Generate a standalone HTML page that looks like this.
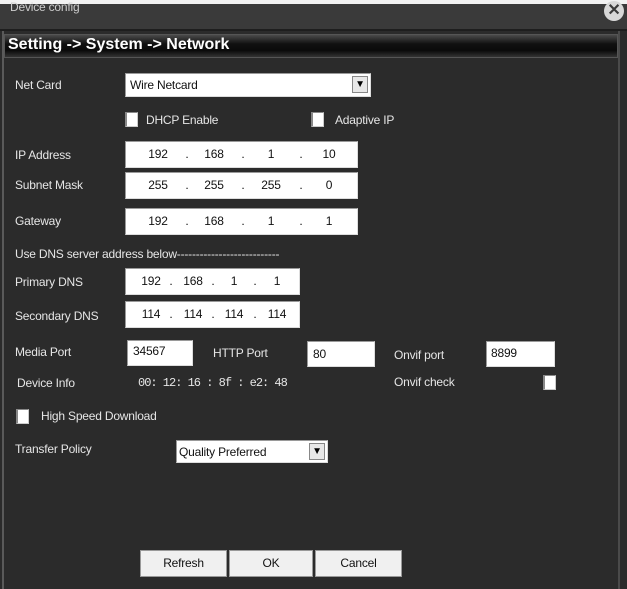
<!DOCTYPE html>
<html><head><style>
*{margin:0;padding:0;box-sizing:border-box}
body{width:627px;height:589px;background:#2b2b2b;position:relative;overflow:hidden;font-family:"Liberation Sans",sans-serif;font-size:12px;color:#e6e6e6;letter-spacing:-0.2px}
.a{position:absolute;white-space:nowrap}
.box{position:absolute;background:#fff;border:1px solid #9a9a9a;border-right-color:#ddd;border-bottom-color:#ddd;color:#111}
.cb{position:absolute;width:13px;height:15px;background:#fff;border:1px solid #ccc;border-left:2px solid #888;border-top-color:#888}
.n{position:absolute;top:5px;font-size:12px;color:#111;transform:translateX(-50%)}
.btn{position:absolute;top:550px;height:27px;background:#f0f0f0;border:1px solid #999;color:#111;text-align:center;line-height:25px;font-size:12px}
.dd{position:absolute;right:2px;top:2px;width:16px;height:17px;background:#e8e8e8;border:1px solid #888;font-size:10px;text-align:center;line-height:15px;color:#000}
</style></head><body>
<div class="a" style="left:0;top:0;width:627px;height:4px;background:#f2f2f2"></div>
<div class="a" style="left:0;top:4px;width:627px;height:25px;background:#3a3a3a"></div>
<div class="a" style="left:10px;top:0px;color:#ccc;font-size:12px">Device config</div>
<div class="a" style="left:604px;top:1px;width:20px;height:20px;border-radius:50%;background:#d8d8d8;color:#3a3a3a;font-size:16px;font-weight:bold;text-align:center;line-height:20px">✕</div>
<div class="a" style="left:0;top:29px;width:627px;height:2px;background:#1e1e1e"></div>
<div class="a" style="left:2px;top:31px;width:2px;height:558px;background:#5a5a5a"></div>
<div class="a" style="left:618px;top:31px;width:2px;height:558px;background:#4a4a4a"></div>
<div class="a" style="left:4px;top:34px;width:614px;height:24px;background:linear-gradient(#4a4a4a,#111 40%,#0a0a0a 70%,#333);border:1px solid #555"></div>
<div class="a" style="left:8px;top:35px;color:#fff;font-size:16px;font-weight:bold;line-height:20px;letter-spacing:0">Setting -&gt; System -&gt; Network</div>

<div class="a" style="left:15px;top:78px">Net Card</div>
<div class="box" style="left:125px;top:73px;width:246px;height:24px"><span class="a" style="left:4px;top:4px">Wire Netcard</span><div class="dd">▼</div></div>

<div class="cb" style="left:125px;top:112px"></div><div class="a" style="left:146px;top:113px">DHCP Enable</div>
<div class="cb" style="left:311px;top:112px"></div><div class="a" style="left:335px;top:113px">Adaptive IP</div>

<div class="a" style="left:15px;top:148px">IP Address</div>
<div class="box" style="left:125px;top:141px;width:233px;height:27px">
<span class="n" style="left:32px">192</span><span class="n" style="left:61px">.</span><span class="n" style="left:88px">168</span><span class="n" style="left:117px">.</span><span class="n" style="left:145px">1</span><span class="n" style="left:175px">.</span><span class="n" style="left:203px">10</span></div>
<div class="a" style="left:15px;top:178px">Subnet Mask</div>
<div class="box" style="left:125px;top:172px;width:233px;height:27px">
<span class="n" style="left:32px">255</span><span class="n" style="left:61px">.</span><span class="n" style="left:88px">255</span><span class="n" style="left:117px">.</span><span class="n" style="left:145px">255</span><span class="n" style="left:175px">.</span><span class="n" style="left:203px">0</span></div>
<div class="a" style="left:15px;top:214px">Gateway</div>
<div class="box" style="left:125px;top:208px;width:233px;height:27px">
<span class="n" style="left:32px">192</span><span class="n" style="left:61px">.</span><span class="n" style="left:88px">168</span><span class="n" style="left:117px">.</span><span class="n" style="left:145px">1</span><span class="n" style="left:175px">.</span><span class="n" style="left:203px">1</span></div>
<div class="a" style="left:15px;top:247px">Use DNS server address below---------------------------</div>
<div class="a" style="left:15px;top:275px">Primary DNS</div>
<div class="box" style="left:125px;top:268px;width:175px;height:27px">
<span class="n" style="left:25px">192</span><span class="n" style="left:45px">.</span><span class="n" style="left:67px">168</span><span class="n" style="left:87px">.</span><span class="n" style="left:108px">1</span><span class="n" style="left:129px">.</span><span class="n" style="left:151px">1</span></div>
<div class="a" style="left:15px;top:309px">Secondary DNS</div>
<div class="box" style="left:125px;top:301px;width:175px;height:27px">
<span class="n" style="left:25px">114</span><span class="n" style="left:45px">.</span><span class="n" style="left:67px">114</span><span class="n" style="left:87px">.</span><span class="n" style="left:108px">114</span><span class="n" style="left:129px">.</span><span class="n" style="left:151px">114</span></div>

<div class="a" style="left:15px;top:345px">Media Port</div>
<div class="box" style="left:127px;top:340px;width:66px;height:26px"><span class="a" style="left:5px;top:3px">34567</span></div>
<div class="a" style="left:213px;top:346px">HTTP Port</div>
<div class="box" style="left:307px;top:341px;width:68px;height:26px"><span class="a" style="left:5px;top:5px">80</span></div>
<div class="a" style="left:394px;top:348px">Onvif port</div>
<div class="box" style="left:486px;top:341px;width:69px;height:26px"><span class="a" style="left:4px;top:4px">8899</span></div>

<div class="a" style="left:17px;top:376px">Device Info</div>
<div class="a" style="left:138px;top:376px;font-family:'Liberation Mono',monospace;font-size:12px;letter-spacing:-1px">00: 12: 16 : 8f : e2: 48</div>
<div class="a" style="left:394px;top:375px">Onvif check</div>
<div class="cb" style="left:543px;top:375px"></div>

<div class="cb" style="left:16px;top:409px"></div>
<div class="a" style="left:41px;top:409px">High Speed Download</div>
<div class="a" style="left:15px;top:442px">Transfer Policy</div>
<div class="box" style="left:176px;top:440px;width:152px;height:23px"><span class="a" style="left:2px;top:4px">Quality Preferred</span><div class="dd" style="top:2px;height:17px">▼</div></div>

<div class="btn" style="left:140px;width:87px">Refresh</div>
<div class="btn" style="left:229px;width:84px">OK</div>
<div class="btn" style="left:315px;width:87px">Cancel</div>
</body></html>
